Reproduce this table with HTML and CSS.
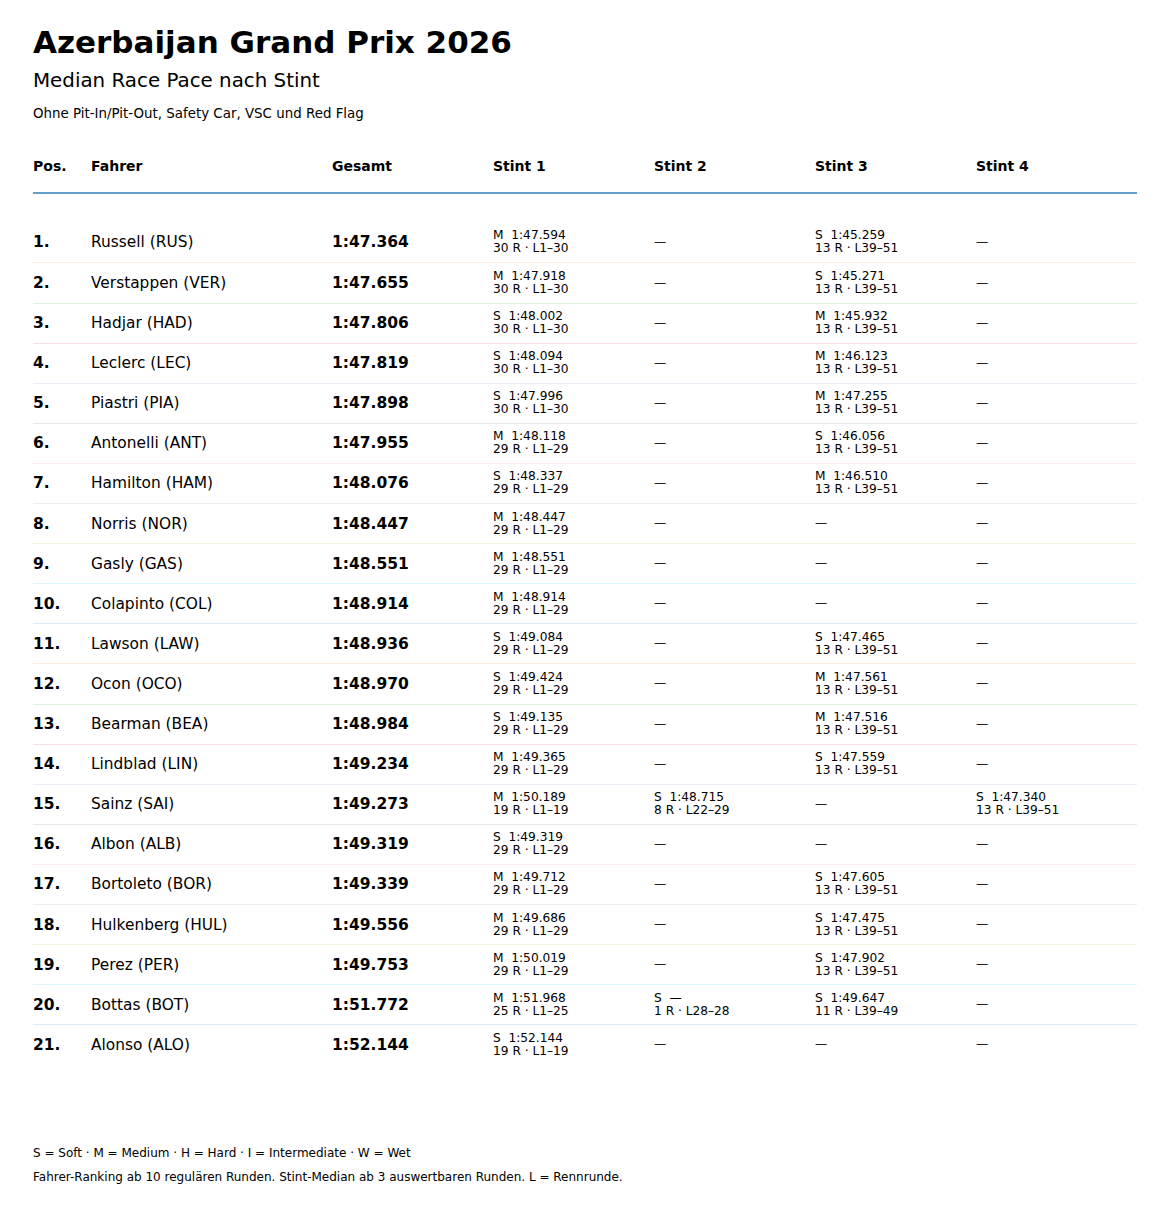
FILE: index.html
```html
<!DOCTYPE html>
<html lang="de">
<head>
<meta charset="utf-8">
<title>Azerbaijan Grand Prix 2026</title>
<link rel="stylesheet" href="styles.css">
</head>
<body>
<div class="page">
  <h1 class="title">Azerbaijan Grand Prix 2026</h1>
  <h2 class="subtitle">Median Race Pace nach Stint</h2>
  <p class="note">Ohne Pit-In/Pit-Out, Safety Car, VSC und Red Flag</p>

  <div class="table">
    <div class="head">
      <div>Pos.</div><div>Fahrer</div><div>Gesamt</div><div>Stint 1</div><div>Stint 2</div><div>Stint 3</div><div>Stint 4</div>
    </div>
    <div class="body">
      <div class="row"><div class="pos">1.</div><div class="name">Russell (RUS)</div><div class="total">1:47.364</div><div class="st"><span class="l1">M  1:47.594</span><span>30 R · L1–30</span></div><div class="st dash">—</div><div class="st"><span class="l1">S  1:45.259</span><span>13 R · L39–51</span></div><div class="st dash">—</div></div>
      <div class="row c1"><div class="pos">2.</div><div class="name">Verstappen (VER)</div><div class="total">1:47.655</div><div class="st"><span class="l1">M  1:47.918</span><span>30 R · L1–30</span></div><div class="st dash">—</div><div class="st"><span class="l1">S  1:45.271</span><span>13 R · L39–51</span></div><div class="st dash">—</div></div>
      <div class="row c2"><div class="pos">3.</div><div class="name">Hadjar (HAD)</div><div class="total">1:47.806</div><div class="st"><span class="l1">S  1:48.002</span><span>30 R · L1–30</span></div><div class="st dash">—</div><div class="st"><span class="l1">M  1:45.932</span><span>13 R · L39–51</span></div><div class="st dash">—</div></div>
      <div class="row c3"><div class="pos">4.</div><div class="name">Leclerc (LEC)</div><div class="total">1:47.819</div><div class="st"><span class="l1">S  1:48.094</span><span>30 R · L1–30</span></div><div class="st dash">—</div><div class="st"><span class="l1">M  1:46.123</span><span>13 R · L39–51</span></div><div class="st dash">—</div></div>
      <div class="row c4"><div class="pos">5.</div><div class="name">Piastri (PIA)</div><div class="total">1:47.898</div><div class="st"><span class="l1">S  1:47.996</span><span>30 R · L1–30</span></div><div class="st dash">—</div><div class="st"><span class="l1">M  1:47.255</span><span>13 R · L39–51</span></div><div class="st dash">—</div></div>
      <div class="row c5"><div class="pos">6.</div><div class="name">Antonelli (ANT)</div><div class="total">1:47.955</div><div class="st"><span class="l1">M  1:48.118</span><span>29 R · L1–29</span></div><div class="st dash">—</div><div class="st"><span class="l1">S  1:46.056</span><span>13 R · L39–51</span></div><div class="st dash">—</div></div>
      <div class="row c6"><div class="pos">7.</div><div class="name">Hamilton (HAM)</div><div class="total">1:48.076</div><div class="st"><span class="l1">S  1:48.337</span><span>29 R · L1–29</span></div><div class="st dash">—</div><div class="st"><span class="l1">M  1:46.510</span><span>13 R · L39–51</span></div><div class="st dash">—</div></div>
      <div class="row c7"><div class="pos">8.</div><div class="name">Norris (NOR)</div><div class="total">1:48.447</div><div class="st"><span class="l1">M  1:48.447</span><span>29 R · L1–29</span></div><div class="st dash">—</div><div class="st dash">—</div><div class="st dash">—</div></div>
      <div class="row c8"><div class="pos">9.</div><div class="name">Gasly (GAS)</div><div class="total">1:48.551</div><div class="st"><span class="l1">M  1:48.551</span><span>29 R · L1–29</span></div><div class="st dash">—</div><div class="st dash">—</div><div class="st dash">—</div></div>
      <div class="row c9"><div class="pos">10.</div><div class="name">Colapinto (COL)</div><div class="total">1:48.914</div><div class="st"><span class="l1">M  1:48.914</span><span>29 R · L1–29</span></div><div class="st dash">—</div><div class="st dash">—</div><div class="st dash">—</div></div>
      <div class="row c0"><div class="pos">11.</div><div class="name">Lawson (LAW)</div><div class="total">1:48.936</div><div class="st"><span class="l1">S  1:49.084</span><span>29 R · L1–29</span></div><div class="st dash">—</div><div class="st"><span class="l1">S  1:47.465</span><span>13 R · L39–51</span></div><div class="st dash">—</div></div>
      <div class="row c1"><div class="pos">12.</div><div class="name">Ocon (OCO)</div><div class="total">1:48.970</div><div class="st"><span class="l1">S  1:49.424</span><span>29 R · L1–29</span></div><div class="st dash">—</div><div class="st"><span class="l1">M  1:47.561</span><span>13 R · L39–51</span></div><div class="st dash">—</div></div>
      <div class="row c2"><div class="pos">13.</div><div class="name">Bearman (BEA)</div><div class="total">1:48.984</div><div class="st"><span class="l1">S  1:49.135</span><span>29 R · L1–29</span></div><div class="st dash">—</div><div class="st"><span class="l1">M  1:47.516</span><span>13 R · L39–51</span></div><div class="st dash">—</div></div>
      <div class="row c3"><div class="pos">14.</div><div class="name">Lindblad (LIN)</div><div class="total">1:49.234</div><div class="st"><span class="l1">M  1:49.365</span><span>29 R · L1–29</span></div><div class="st dash">—</div><div class="st"><span class="l1">S  1:47.559</span><span>13 R · L39–51</span></div><div class="st dash">—</div></div>
      <div class="row c4"><div class="pos">15.</div><div class="name">Sainz (SAI)</div><div class="total">1:49.273</div><div class="st"><span class="l1">M  1:50.189</span><span>19 R · L1–19</span></div><div class="st"><span class="l1">S  1:48.715</span><span>8 R · L22–29</span></div><div class="st dash">—</div><div class="st"><span class="l1">S  1:47.340</span><span>13 R · L39–51</span></div></div>
      <div class="row c5"><div class="pos">16.</div><div class="name">Albon (ALB)</div><div class="total">1:49.319</div><div class="st"><span class="l1">S  1:49.319</span><span>29 R · L1–29</span></div><div class="st dash">—</div><div class="st dash">—</div><div class="st dash">—</div></div>
      <div class="row c6"><div class="pos">17.</div><div class="name">Bortoleto (BOR)</div><div class="total">1:49.339</div><div class="st"><span class="l1">M  1:49.712</span><span>29 R · L1–29</span></div><div class="st dash">—</div><div class="st"><span class="l1">S  1:47.605</span><span>13 R · L39–51</span></div><div class="st dash">—</div></div>
      <div class="row c7"><div class="pos">18.</div><div class="name">Hulkenberg (HUL)</div><div class="total">1:49.556</div><div class="st"><span class="l1">M  1:49.686</span><span>29 R · L1–29</span></div><div class="st dash">—</div><div class="st"><span class="l1">S  1:47.475</span><span>13 R · L39–51</span></div><div class="st dash">—</div></div>
      <div class="row c8"><div class="pos">19.</div><div class="name">Perez (PER)</div><div class="total">1:49.753</div><div class="st"><span class="l1">M  1:50.019</span><span>29 R · L1–29</span></div><div class="st dash">—</div><div class="st"><span class="l1">S  1:47.902</span><span>13 R · L39–51</span></div><div class="st dash">—</div></div>
      <div class="row c9"><div class="pos">20.</div><div class="name">Bottas (BOT)</div><div class="total">1:51.772</div><div class="st"><span class="l1">M  1:51.968</span><span>25 R · L1–25</span></div><div class="st"><span class="l1">S  —</span><span>1 R · L28–28</span></div><div class="st"><span class="l1">S  1:49.647</span><span>11 R · L39–49</span></div><div class="st dash">—</div></div>
      <div class="row c0"><div class="pos">21.</div><div class="name">Alonso (ALO)</div><div class="total">1:52.144</div><div class="st"><span class="l1">S  1:52.144</span><span>19 R · L1–19</span></div><div class="st dash">—</div><div class="st dash">—</div><div class="st dash">—</div></div>
    </div>
  </div>

  <footer class="foot">
    <p class="legend">S = Soft · M = Medium · H = Hard · I = Intermediate · W = Wet</p>
    <p class="legend second">Fahrer-Ranking ab 10 regulären Runden. Stint-Median ab 3 auswertbaren Runden. L = Rennrunde.</p>
  </footer>
</div>
</body>
</html>
```

FILE: styles.css
```css
html, body {
  margin: 0;
  padding: 0;
  background: #ffffff;
}

body {
  font-family: "DejaVu Sans", "Liberation Sans", sans-serif;
  color: #000000;
}

.page {
  padding: 22px 33px 0 33px;
}

.title {
  margin: 0;
  font-size: 31px;
  line-height: 40px;
  font-weight: bold;
}

.subtitle {
  margin: 7px 0 0 0;
  font-size: 19.85px;
  line-height: 24px;
  font-weight: normal;
}

.note {
  margin: 13.4px 0 0 0;
  font-size: 13.4px;
  line-height: 16px;
}

.table {
  margin-top: 33.8px;
  width: 1104px;
}

.head,
.row {
  display: grid;
  grid-template-columns: 58px 241px repeat(5, 161px);
}

.head {
  font-size: 14px;
  line-height: 20px;
  font-weight: bold;
  padding-bottom: 16px;
  border-bottom: 2px solid #62a0cb;
}

.body {
  margin-top: 28.2px;
}

.row {
  height: 40.1px;
  box-sizing: border-box;
  align-items: center;
  border-top: 1px solid transparent;
}

.row:first-child {
  border-top: 0;
}

.c0 { border-top-color: rgba(31, 119, 180, 0.15); }
.c1 { border-top-color: rgba(255, 127, 14, 0.15); }
.c2 { border-top-color: rgba(44, 160, 44, 0.15); }
.c3 { border-top-color: rgba(214, 39, 40, 0.15); }
.c4 { border-top-color: rgba(148, 103, 189, 0.15); }
.c5 { border-top-color: rgba(140, 86, 75, 0.15); }
.c6 { border-top-color: rgba(227, 119, 194, 0.15); }
.c7 { border-top-color: rgba(127, 127, 127, 0.15); }
.c8 { border-top-color: rgba(188, 189, 34, 0.15); }
.c9 { border-top-color: rgba(23, 190, 207, 0.15); }

.pos {
  font-size: 15.5px;
  font-weight: bold;
}

.name {
  font-size: 15.4px;
}

.total {
  font-size: 15.5px;
  font-weight: bold;
}

.st {
  font-size: 12.2px;
  line-height: 13px;
  display: flex;
  flex-direction: column;
}

.st .l1 {
  white-space: pre;
}

.st.dash {
  color: #222222;
}

.foot {
  margin-top: 81px;
}

.legend {
  margin: 0;
  font-size: 12px;
  line-height: 16px;
}

.legend.second {
  margin-top: 8px;
}
```
